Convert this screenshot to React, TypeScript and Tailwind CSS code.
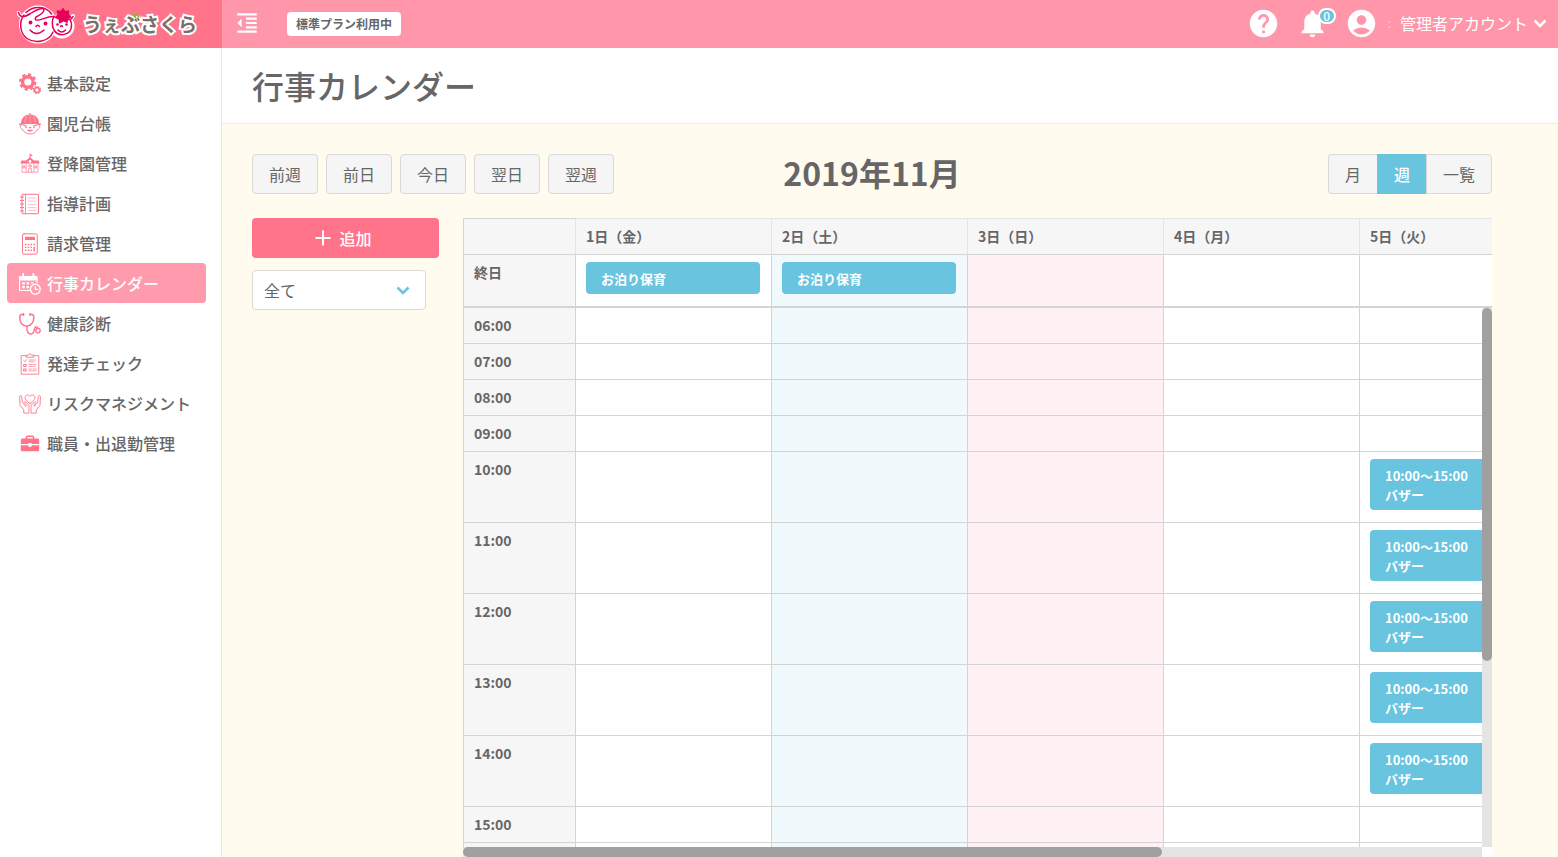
import React, { useEffect, useRef, useState } from 'react'
import clsx from 'clsx'
import {
  MdAccountCircle,
  MdFormatIndentDecrease,
  MdHelp,
  MdNotifications
} from 'react-icons/md'

interface IconProps {
  className?: string
}

function Svg({ className, children }: IconProps & { children: React.ReactNode }) {
  return (
    <svg
      viewBox="0 0 22 22"
      fill="none"
      stroke="currentColor"
      strokeLinecap="round"
      strokeLinejoin="round"
      aria-hidden="true"
      className={clsx('size-[22px] shrink-0', className)}
    >
      {children}
    </svg>
  )
}

function GearsIcon() {
  return (
    <Svg>
      <circle cx="8.8" cy="9" r="5.3" strokeWidth="3.4" />
      <circle cx="8.8" cy="9" r="7.5" strokeWidth="2.4" strokeDasharray="3.1 2.79" strokeLinecap="butt" />
      <circle cx="18" cy="17" r="2.5" strokeWidth="1.7" />
      <circle cx="18" cy="17" r="3.5" strokeWidth="1.2" strokeDasharray="1.5 1.25" strokeLinecap="butt" />
    </Svg>
  )
}

function ChildIcon() {
  return (
    <Svg>
      <path d="M2 10.500C2.200 4.500 6 1.600 11 1.600s8.800 2.900 9 8.900z" fill="currentColor" stroke="none" />
      <path d="M11 .8v1.400M.8 11.200Q11 8.600 21.200 11.200" strokeWidth="1.500" />
      <path d="M7.800 2.800Q6 6 5.800 9M14.200 2.800Q16 6 16.200 9M11 2v7" stroke="#fff" strokeWidth=".4" />
      <path d="M2.600 11.800c-2 .2-2.200 3.600.6 4.200 1.600 3.200 4.400 5 7.800 5s6.200-1.800 7.800-5c2.800-.6 2.600-4 .6-4.200" strokeWidth=".9" />
      <path d="M4 12l3.400 1M18 12l-3.400 1M8.600 17.200q2.400 2 4.800 0zM10.200 14.600h1.600" strokeWidth="1.100" />
      <circle cx="7" cy="14.400" r=".8" fill="currentColor" stroke="none" />
      <circle cx="15" cy="14.400" r=".8" fill="currentColor" stroke="none" />
    </Svg>
  )
}

function SchoolIcon() {
  return (
    <Svg>
      <path d="M11 5V1" strokeWidth=".9" />
      <path d="M11 1l3 1.300-3 1.300zM11 4.200l4 3.400h4.600l1 2.800H1.400l1-2.800H7z" fill="currentColor" stroke="none" />
      <path d="M3 10.500v8.700h16v-8.700M7.200 11v8M14.800 11v8M9.600 19v-3.400h2.800V19" strokeWidth=".9" opacity=".75" />
      <path d="M4.400 13h1.400v2H4.400zM16.200 13h1.400v2h-1.400z" strokeWidth=".8" />
      <circle cx="11" cy="8.400" r="1.400" fill="#fff" stroke="none" />
      <circle cx="11" cy="13" r="1.300" strokeWidth=".8" />
    </Svg>
  )
}

function NotebookIcon() {
  return (
    <Svg>
      <rect x="3" y="1.200" width="16.500" height="19.600" rx="1.500" strokeWidth="1.100" />
      <path d="M6.500 1.500v19" strokeWidth=".8" />
      <path d="M1.500 4h3M1.500 7.500h3M1.500 11h3M1.500 14.500h3M1.500 18h3" strokeWidth="1.200" />
      <path d="M9 5h8M9 8.200h8M9 11.400h8M9 14.600h8M9 17.500h8" strokeWidth=".6" opacity=".7" />
    </Svg>
  )
}

function CalculatorIcon() {
  return (
    <Svg>
      <rect x="3.500" y=".8" width="14.800" height="20.400" rx="1.500" strokeWidth="1" />
      <rect x="6" y="3.800" width="10" height="3.200" fill="currentColor" stroke="none" />
      <path d="M6.700 10.800v7.500M9.500 10.800v7.500M12.300 10.800v7.500" strokeWidth="1.500" strokeDasharray="1.400 1.500" strokeLinecap="butt" />
      <path d="M15.200 10.800v1.500M15.200 13.700v4.600" strokeWidth="1.500" strokeLinecap="butt" />
    </Svg>
  )
}

function CalendarClockIcon() {
  return (
    <Svg>
      <path d="M11 17.500H1.500c-.6 0-1-.4-1-1V4.500c0-.6.4-1 1-1h15.600c.6 0 1 .4 1 1V10" strokeWidth="1.200" />
      <path d="M.5 3.300h17.600v4.200H.5z" fill="currentColor" stroke="none" />
      <path d="M4.200 1v3.500M14.400 1v3.500" strokeWidth="1.800" />
      <path d="M3.200 9.200h2.600v2.200H3.200zM7.600 9.200h2.600v2.200H7.600zM12 9.200h2.600v1.200H12zM3.200 13h2.600v2.200H3.200zM7.600 13h2.400v2.200H7.600z" fill="currentColor" stroke="none" />
      <circle cx="16.300" cy="16.200" r="4.900" strokeWidth="1.400" />
      <path d="M16.300 13.500v2.900h2.300" strokeWidth="1.200" />
    </Svg>
  )
}

function StethoscopeIcon() {
  return (
    <Svg>
      <path d="M4.500 1.500H2.300C1 1.500.8 3 .8 5c0 4.500 2.600 8.200 6.800 8.200S14.800 9.500 14.800 5c0-2-.2-3.500-1.500-3.500h-2.200" strokeWidth="1.500" />
      <path d="M4.500.8v1.500M11 .8v1.500" strokeWidth="1.600" />
      <path d="M8 13.500c-.5 5 1 7.500 4 7.500 4.500 0 2-6.300 5-7" strokeWidth="1.400" />
      <circle cx="19" cy="17.600" r="2.200" strokeWidth="1.300" />
      <path d="M16.500 14c1.600-.6 2.500.2 2.500 1.400" strokeWidth="1.200" />
    </Svg>
  )
}

function ChecklistIcon() {
  return (
    <Svg>
      <path d="M7 2.600H2.200v18.600h17.600V2.600H15" strokeWidth=".9" />
      <path d="M7 3.800V2.200h2.400c.4-1.800 2.800-1.800 3.200 0H15v1.600z" strokeWidth=".9" />
      <path d="M4.800 7.700l1 1 1.800-2" strokeWidth=".9" />
      <path d="M5 11.500h2.200v2H5zM5 16h2.200v2H5z" strokeWidth="1" />
      <path d="M10 7h7M10 8.800h5M10 11.500h3.500M15 11.500h2M10 13.300h6M10 16h2.500M14 16h3M10 17.800h7" strokeWidth=".7" />
    </Svg>
  )
}

function HeartHandsIcon() {
  return (
    <Svg>
      <path d="M11 10.500C7.500 8 5.600 6 6.100 3.900 6.600 1.600 9.600 1.200 11 3.500c1.400-2.300 4.400-1.900 4.900.4.5 2.100-1.400 4.100-4.900 6.600z" strokeWidth=".9" />
      <path d="M4.800 19.700v-2.900L1 12.500.6 3.600c0-1.400 2-1.400 2.100 0l.7 6 3.500 3.700c1-1.600-1.400-2.800-1.900-3.600.4-1.600 2-.9 4.200 1.800 1 1.300.8 3.500.7 8.200z" strokeWidth=".9" />
      <path d="M17.200 19.700v-2.900l3.800-4.300.4-8.900c0-1.400-2-1.400-2.100 0l-.7 6-3.500 3.700c-1-1.600 1.400-2.800 1.900-3.600-.4-1.600-2-.9-4.200 1.800-1 1.300-.8 3.500-.7 8.200z" strokeWidth=".9" />
    </Svg>
  )
}

function BriefcaseIcon() {
  return (
    <Svg>
      <path d="M7.500 6V4.200c0-.6.400-1 1-1h5c.6 0 1 .4 1 1V6" strokeWidth="1.600" />
      <path d="M3.500 5.500h15c1 0 1.700.7 1.700 1.700V11h-7.600v-1H9.400v1H1.800V7.200c0-1 .7-1.700 1.700-1.700zM1.800 12.200h7.600v1.600h3.200v-1.600h7.600v4.500c0 .9-.7 1.600-1.700 1.600h-15c-1 0-1.700-.7-1.700-1.600z" fill="currentColor" stroke="none" />
    </Svg>
  )
}

function LogoMark() {
  return (
    <svg viewBox="0 0 58 42" fill="none" strokeLinecap="round" strokeLinejoin="round" className="h-[42px] w-[58px] shrink-0" aria-hidden="true">
      <g stroke="#fff" strokeWidth="4" fill="#fff">
        <circle cx="21" cy="22.500" r="17" />
        <circle cx="45" cy="24" r="10.500" />
        <path d="M1.500 11q2 6 7 1M56 14q-2 4-6 3" fill="none" />
      </g>
      <g stroke="#e5005a" strokeWidth="1.500">
        <path d="M7 13C1.500 20 3 31.500 10 36.500c8 5.500 22 3.500 26-6.500" />
        <path d="M9 10.500C16 3.500 29 3.500 34.500 12" />
        <path d="M1.500 10.500c1.500 5.500 5.500 5 12 1C20 7 29 4 26.500 9.500c-2 4-10 5-8 8 2.500 3 10-3.500 19-3" />
        <path d="M37 14.500c-2 3-2.500 9 0 13.500 4.500 7.500 17 5.500 17.500-4 .2-3-.5-5-1.500-6.500M56 14.500q-1.500 3.500-5.500 3" />
        <path d="M13 28q6.500 7 14 0M19 24.500q1.500-2.500 3.500 0M41 28q3.500 4 7.500 0M43.500 24.500q1-1.500 2 0" />
      </g>
      <g fill="#e5005a">
        <circle cx="13.500" cy="20.500" r="1.900" />
        <circle cx="28.500" cy="21.500" r="1.900" />
        <circle cx="40.500" cy="22.500" r="1.300" />
        <circle cx="49.500" cy="22.500" r="1.300" />
        <path
          d="M46 7l1.700 3 3.800-.6-.8 3.300 2.800 2.300-3.300 1.500-.2 3.500-3.600-1.600-3.600 2.200-.4-3.700-3.600-1.500 2.800-2.700-1.100-3.500 3.600.8z"
          stroke="#e5005a"
          strokeWidth="1.800"
        />
      </g>
    </svg>
  )
}

function Chevron({ className }: IconProps) {
  return (
    <svg
      viewBox="0 0 14 9"
      fill="none"
      stroke="currentColor"
      strokeWidth="2.500"
      className={clsx('h-[9px] w-[14px] shrink-0', className)}
      aria-hidden="true"
    >
      <path d="M1.500 1.500L7 7l5.500-5.500" />
    </svg>
  )
}

const menuItems = [
  { label: '基本設定', icon: GearsIcon },
  { label: '園児台帳', icon: ChildIcon },
  { label: '登降園管理', icon: SchoolIcon },
  { label: '指導計画', icon: NotebookIcon },
  { label: '請求管理', icon: CalculatorIcon },
  { label: '行事カレンダー', icon: CalendarClockIcon, active: true },
  { label: '健康診断', icon: StethoscopeIcon },
  { label: '発達チェック', icon: ChecklistIcon },
  { label: 'リスクマネジメント', icon: HeartHandsIcon },
  { label: '職員・出退勤管理', icon: BriefcaseIcon }
]

const days = [
  { label: '1日（金）', allDay: 'お泊り保育' },
  { label: '2日（土）', allDay: 'お泊り保育', bg: 'bg-[#f0f9fc]' },
  { label: '3日（日）', bg: 'bg-[#fff0f3]' },
  { label: '4日（月）' },
  { label: '5日（火）', event: { start: 10, end: 15, title: 'バザー' } },
  { label: '6日（水）' },
  { label: '7日（木）' }
]

const hours = Array.from({ length: 18 }, (_, i) => i + 6)
const moves = ['前週', '前日', '今日', '翌日', '翌週']
const views = ['月', '週', '一覧']

function Columns() {
  return (
    <colgroup>
      <col className="w-[113px]" />
      {days.map(day => <col key={day.label} />)}
    </colgroup>
  )
}

function EventButton({ children }: { children: React.ReactNode }) {
  return (
    <button
      type="button"
      className="block w-full rounded bg-[#68c4df] px-[15px] pt-[7px] pb-[6px] text-left text-[13px] leading-[19px] font-bold text-white"
    >
      {children}
    </button>
  )
}

function WeekCalendar() {
  const headRef = useRef<HTMLDivElement>(null)
  const bodyRef = useRef<HTMLDivElement>(null)
  const [bars, setBars] = useState({ left: 0, width: 0, top: 0, height: 0 })

  const table = 'w-full min-w-[1485px] table-fixed border-separate border-spacing-0'
  const rowHead = 'border-x border-[#d4d4d4] bg-[#f6f6f6] px-[10px] pt-[7px] text-left align-top'

  // Keep the day header and both scrollbar thumbs in step with the body
  const syncScroll = () => {
    const body = bodyRef.current
    if (!body) return
    if (headRef.current) headRef.current.scrollLeft = body.scrollLeft
    setBars({
      left: (body.scrollLeft / body.scrollWidth) * 100,
      width: (body.clientWidth / body.scrollWidth) * 100,
      top: (body.scrollTop / body.scrollHeight) * 100,
      height: (body.clientHeight / body.scrollHeight) * 100
    })
  }

  useEffect(() => {
    syncScroll()
    window.addEventListener('resize', syncScroll)
    return () => window.removeEventListener('resize', syncScroll)
  }, [])

  return (
    <div className="flex min-h-0 min-w-0 flex-1 flex-col text-sm leading-5 font-bold">
      <div ref={headRef} className="shrink-0 overflow-x-auto overflow-y-hidden [scrollbar-width:none]">
        <table className={table}>
          <Columns />
          <thead>
            <tr className="h-[37px] bg-[#f6f6f6]">
              <td className="border border-[#d4d4d4] border-r-[#e4e4e4]" />
              {days.map(day => (
                <th
                  key={day.label}
                  scope="col"
                  className="border-y border-r border-[#d4d4d4] border-t-[#e4e4e4] border-r-[#e4e4e4] px-[10px] pt-[7px] text-left align-top"
                >
                  {day.label}
                </th>
              ))}
            </tr>
          </thead>
          <tbody>
            <tr>
              <th scope="row" className={clsx(rowHead, 'border-b-2')}>終日</th>
              {days.map(day => (
                <td
                  key={day.label}
                  className={clsx(
                    'border-r border-b-2 border-[#d4d4d4] pt-[7px] pr-[11px] pb-3 pl-[10px] align-top',
                    day.bg || 'bg-white'
                  )}
                >
                  {day.allDay && <EventButton>{day.allDay}</EventButton>}
                </td>
              ))}
            </tr>
          </tbody>
        </table>
      </div>

      <div className="flex min-h-0 flex-1">
        <div
          ref={bodyRef}
          onScroll={syncScroll}
          className="min-w-0 flex-1 overflow-auto [scrollbar-width:none]"
        >
          <table className={table}>
            <Columns />
            <tbody>
              {hours.map(hour => (
                <tr key={hour} className="h-9">
                  <th scope="row" className={clsx(rowHead, 'border-b')}>
                    {String(hour).padStart(2, '0')}:00
                  </th>
                  {days.map(day => {
                    const event = day.event && hour >= day.event.start && hour < day.event.end ? day.event : null
                    return (
                      <td
                        key={day.label}
                        className={clsx(
                          'border-r border-b border-[#d4d4d4] align-top',
                          day.bg || 'bg-white',
                          event && 'pt-[7px] pr-[11px] pb-3 pl-[10px]'
                        )}
                      >
                        {event && (
                          <EventButton>
                            {event.start}:00〜{event.end}:00
                            <br />
                            {event.title}
                          </EventButton>
                        )}
                      </td>
                    )
                  })}
                </tr>
              ))}
            </tbody>
          </table>
        </div>
        <div className="w-[10px] shrink-0 bg-[#e4e4e4]">
          <div
            className="relative rounded-full bg-[#a0a0a0]"
            style={{ top: `${bars.top}%`, height: `${bars.height}%` }}
          />
        </div>
      </div>

      <div className="flex h-[10px] shrink-0 bg-white pr-[10px]">
        <div className="flex-1 bg-[#e4e4e4]">
          <div
            className="relative h-full rounded-full bg-[#a0a0a0]"
            style={{ left: `${bars.left}%`, width: `${bars.width}%` }}
          />
        </div>
      </div>
    </div>
  )
}

export default function App() {
  const [view, setView] = useState('週')
  const [filter, setFilter] = useState('all')

  return (
    <div className="flex h-screen flex-col overflow-hidden bg-white font-['Noto_Sans_CJK_JP',sans-serif] text-[#666666]">
      <header className="flex h-12 shrink-0 bg-[#ff96a9] text-white">
        <a href="#" className="flex w-[222px] shrink-0 items-center gap-2 bg-[#ff738b] pb-[2px] pl-[17px]">
          <LogoMark />
          <span className="relative text-[19px] leading-none font-bold text-[#776f6b] [-webkit-text-stroke:4px_white] [paint-order:stroke_fill]">
            うぇぶさくら
            {/* leaf on the voicing mark */}
            <svg viewBox="0 0 7 6" className="absolute -top-px left-[50px] h-[6px] w-[7px]" aria-hidden="true">
              <path d="M1 1.500l1.500 3M4 .8l1.500 3" stroke="#7fbf26" strokeWidth="1.800" strokeLinecap="round" />
            </svg>
          </span>
        </a>
        <div className="flex flex-1 items-center pr-[11px] pl-3">
          <button type="button" aria-label="メニューを閉じる" className="pb-[2px]">
            <MdFormatIndentDecrease className="size-[26px]" />
          </button>
          <span className="ml-[27px] rounded bg-white px-[9px] text-xs leading-6 font-bold text-[#666666]">
            標準プラン利用中
          </span>
          <div className="ml-auto flex items-center gap-4 pb-[2px]">
            <button type="button" aria-label="ヘルプ">
              <MdHelp className="size-[33px]" />
            </button>
            <button type="button" aria-label="お知らせ" className="relative">
              <MdNotifications className="size-[33px]" />
              <span className="absolute top-px left-[22px] h-4 w-[18px] rounded-full border-2 border-white bg-[#68c4df] text-center text-xs leading-3 font-medium">
                0
              </span>
            </button>
            <button type="button" className="flex items-center gap-[5px] text-base">
              <MdAccountCircle className="mr-[5px] size-[33px]" />
              <span className="pr-1 text-xs opacity-50">:</span>
              管理者アカウント
              <Chevron />
            </button>
          </div>
        </div>
      </header>

      <div className="flex min-h-0 flex-1">
        <aside className="w-[222px] shrink-0 border-r border-[#e8e8e8] bg-white">
          <nav className="pt-[15px] pr-[15px] pl-[7px]">
            {menuItems.map(({ label, icon: Icon, active }) => (
              <a
                key={label}
                href="#"
                aria-current={active ? 'page' : undefined}
                className={clsx(
                  'flex h-10 items-center gap-[6px] rounded-sm pl-3 font-medium whitespace-nowrap',
                  active && 'bg-[#ff9bad] text-white'
                )}
              >
                <span className={clsx('pt-[2px]', active ? 'text-white' : 'text-[#ff738b]')}><Icon /></span>
                {label}
              </a>
            ))}
          </nav>
        </aside>

        <main className="flex min-w-0 flex-1 flex-col">
          <div className="shrink-0 border-b border-[#eeeeee] px-[30px]">
            <h1 className="pt-px pb-px text-[32px] leading-[73px] font-medium">行事カレンダー</h1>
          </div>

          <div className="flex min-h-0 flex-1 flex-col gap-6 bg-[#fffbee] pt-[30px] pr-[66px] pl-[30px]">
            <div className="grid shrink-0 grid-cols-[1fr_auto_1fr] items-start">
              <div className="flex gap-2">
                {moves.map(label => (
                  <button
                    key={label}
                    type="button"
                    className="h-10 rounded border border-[#d9d9d9] bg-[#f5f5f5] px-4"
                  >
                    {label}
                  </button>
                ))}
              </div>
              <h2 className="text-[32px] leading-9 font-bold">2019年11月</h2>
              <div className="flex justify-end">
                {views.map(label => (
                  <button
                    key={label}
                    type="button"
                    aria-pressed={view === label}
                    onClick={() => setView(label)}
                    className={clsx(
                      'h-10 border-y border-l px-4 first:rounded-l last:rounded-r last:border-r',
                      view === label
                        ? 'border-[#68c4df] bg-[#68c4df] font-medium text-white'
                        : 'border-[#d9d9d9] bg-[#f5f5f5]'
                    )}
                  >
                    {label}
                  </button>
                ))}
              </div>
            </div>

            <div className="flex min-h-0 flex-1 gap-6">
              <div className="flex w-[187px] shrink-0 flex-col gap-3">
                <button
                  type="button"
                  className="flex h-10 items-center justify-center gap-2 rounded bg-[#ff738b] pr-1 font-medium text-white"
                >
                  <svg viewBox="0 0 16 16" stroke="currentColor" strokeWidth="2" className="size-4" aria-hidden="true">
                    <path d="M8 .5v15M.5 8h15" />
                  </svg>
                  追加
                </button>
                <div className="relative w-[174px]">
                  <select
                    aria-label="表示する行事"
                    value={filter}
                    onChange={e => setFilter(e.target.value)}
                    className="h-10 w-full appearance-none rounded border border-[#d9d9d9] bg-white pl-[11px]"
                  >
                    <option value="all">全て</option>
                  </select>
                  <Chevron className="pointer-events-none absolute top-4 right-4 text-[#68c4df]" />
                </div>
              </div>
              <WeekCalendar />
            </div>
          </div>
        </main>
      </div>
    </div>
  )
}
